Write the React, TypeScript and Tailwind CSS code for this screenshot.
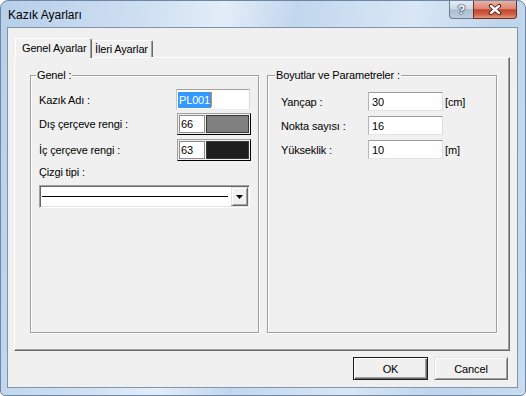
export default function App() {
  const label = "leading-[14px] whitespace-nowrap";
  const input =
    "bg-white border border-t-[#9a9a9a] border-l-[#b4b4b4] border-r-[#dcdcdc] border-b-[#e6e6e6] flex items-center pl-[3px] leading-[14px]";
  return (
    <div className="w-[526px] h-[396px] overflow-hidden bg-white font-['Liberation_Sans',Arial,sans-serif] text-[11px] tracking-[-0.15px] text-black">
      <div className="w-[526px] h-[396px] rounded-t-[8px] rounded-b-[5px] border border-[#6d86a3] bg-[linear-gradient(100deg,#b7cfe9_0%,#cfe0f2_25%,#e3edf8_38%,#c2d7ee_50%,#d9e7f5_70%,#bfd5ec_85%,#c9dcf0_100%)] flex flex-col">
        {/* title bar */}
        <div className="h-[26px] flex justify-between">
          <span className="pl-[7px] pt-[7px] text-[12px] leading-[14px] tracking-normal text-black">Kazık Ayarları</span>
          <div className="flex pr-[8px]">
            <div className="w-[24px] h-[18px] rounded-bl-[4px] border border-t-0 border-r-0 border-[#6a7c93] bg-[linear-gradient(180deg,#e4ecf5_0%,#ccd9e7_45%,#abbdd2_52%,#bccddf_100%)] flex items-center justify-center">
              <span className="text-white font-bold text-[13px] leading-[14px] [text-shadow:0_0_1px_#1d2f45,0_0_1px_#1d2f45,0_0_2px_#1d2f45]">?</span>
            </div>
            <div className="w-[44px] h-[18px] rounded-br-[4px] border border-t-0 border-[#6b2e26] bg-[linear-gradient(180deg,#eab1a3_0%,#dc8674_45%,#c4452f_52%,#cf5f45_78%,#e49c7c_100%)] flex items-center justify-center">
              <svg width="14" height="11" viewBox="0 0 14 11">
                <path d="M3 2 L11 9 M11 2 L3 9" stroke="#4d1a12" strokeWidth="4.2" strokeLinecap="round" />
                <path d="M3 2 L11 9 M11 2 L3 9" stroke="#ffffff" strokeWidth="2.4" strokeLinecap="round" />
              </svg>
            </div>
          </div>
        </div>
        {/* client */}
        <div className="ml-[6px] w-[511px] h-[361px] border border-[#8193a9] bg-[#f0f0f0] flex flex-col pt-[10px] pl-[6px] pr-[7px]">
          {/* tabs */}
          <div className="flex items-end h-[19px] pl-[1px]">
            <div className="relative z-10 -mb-[1px] w-[77px] h-[20px] border-t border-l border-white border-r border-r-[#696969] shadow-[inset_-1px_0_0_#a0a0a0] rounded-tr-[2px] bg-[#f0f0f0] flex items-center pl-[6px] pb-[2px] leading-[14px]">
              Genel Ayarlar
            </div>
            <div className="w-[61px] h-[17px] border-t border-white border-r border-r-[#696969] shadow-[inset_-1px_0_0_#a0a0a0] rounded-tr-[2px] bg-[#f0f0f0] flex items-center pl-[3px] leading-[14px]">
              İleri Ayarlar
            </div>
          </div>
          {/* panel */}
          <div className="h-[294px] border border-t-white border-l-white border-r-[#696969] border-b-[#696969] shadow-[inset_-1px_-1px_0_#a0a0a0] flex pt-[17px] pl-[15px] gap-[8px]">
            {/* left group */}
            <div className="relative w-[229px] h-[258px] border border-[#a0a0a0] shadow-[inset_1px_1px_0_#fff,1px_1px_0_#fff] flex flex-col pl-[8px] pt-[13px]">
              <span className="absolute left-[5px] -top-[8px] px-[1px] bg-[#f0f0f0] leading-[14px]">Genel :</span>
              <div className="flex items-center h-[21px]">
                <span className={label + " w-[137px]"}>Kazık Adı :</span>
                <div className="w-[74px] h-[21px] bg-white border border-t-[#a0a0a0] border-l-[#c8c8c8] border-r-[#d8d8d8] border-b-[#ececec] flex items-center pl-[1px]">
                  <span className="bg-[#3399ff] text-white leading-[16px] px-[1px]">PL001</span>
                  <span className="w-[1px] h-[15px] bg-[#e08a2a]" />
                </div>
              </div>
              <div className="flex items-center h-[21px] mt-[3px]">
                <span className={label + " w-[138px]"}>Dış çerçeve rengi :</span>
                <div className="w-[74px] h-[22px] border border-t-[#a0a0a0] border-l-[#a0a0a0] border-r-black border-b-black flex p-[1px] gap-[1px]">
                  <div className="w-[26px] bg-white border border-[#8c8c8c] flex items-center pl-[1px] leading-[14px]">66</div>
                  <div className="flex-1 bg-[#808080] border border-[#3a3a3a]" />
                </div>
              </div>
              <div className="flex items-center h-[21px] mt-[5px]">
                <span className={label + " w-[138px]"}>İç çerçeve rengi :</span>
                <div className="w-[74px] h-[22px] border border-t-[#a0a0a0] border-l-[#a0a0a0] border-r-black border-b-black flex p-[1px] gap-[1px]">
                  <div className="w-[26px] bg-white border border-[#8c8c8c] flex items-center pl-[1px] leading-[14px]">63</div>
                  <div className="flex-1 bg-[#1e1e1e] border border-[#3a3a3a]" />
                </div>
              </div>
              <span className={label + " mt-[5px]"}>Çizgi tipi :</span>
              <div className="mt-[6px] w-[211px] h-[23px] bg-white border border-t-[#a0a0a0] border-l-[#a0a0a0] border-r-white border-b-white shadow-[inset_1px_1px_0_#696969,inset_-1px_-1px_0_#e3e3e3] flex items-center pl-[2px] pr-[1px]">
                <div className="w-[186px] h-[1px] bg-black" />
                <div className="ml-auto w-[17px] h-[19px] bg-[#f0f0f0] border border-t-[#e3e3e3] border-l-[#e3e3e3] border-r-[#696969] border-b-[#696969] shadow-[inset_1px_1px_0_#fff,inset_-1px_-1px_0_#a0a0a0] flex items-center justify-center">
                  <svg width="7" height="4" viewBox="0 0 7 4">
                    <path d="M0 0 H7 L3.5 4 Z" fill="#000" />
                  </svg>
                </div>
              </div>
            </div>
            {/* right group */}
            <div className="relative w-[230px] h-[258px] border border-[#a0a0a0] shadow-[inset_1px_1px_0_#fff,1px_1px_0_#fff] flex flex-col pl-[13px] pt-[16px]">
              <span className="absolute left-[7px] -top-[8px] px-[1px] bg-[#f0f0f0] leading-[14px]">Boyutlar ve Parametreler :</span>
              <div className="flex items-center h-[19px]">
                <span className={label + " w-[87px]"}>Yançap :</span>
                <div className={input + " w-[75px] h-[19px]"}>30</div>
                <span className={label + " ml-[2px]"}>[cm]</span>
              </div>
              <div className="flex items-center h-[19px] mt-[5px]">
                <span className={label + " w-[87px]"}>Nokta sayısı :</span>
                <div className={input + " w-[75px] h-[19px]"}>16</div>
              </div>
              <div className="flex items-center h-[19px] mt-[5px]">
                <span className={label + " w-[87px]"}>Yükseklik :</span>
                <div className={input + " w-[75px] h-[19px]"}>10</div>
                <span className={label + " ml-[2px]"}>[m]</span>
              </div>
            </div>
          </div>
          {/* buttons */}
          <div className="mt-[6px] flex justify-end gap-[6px] pr-[2px]">
            <button className="w-[75px] h-[23px] bg-[#f0f0f0] border border-[#1a1a1a] shadow-[inset_1px_1px_0_#fff,inset_-1px_-1px_0_#696969,inset_-2px_-2px_0_#a0a0a0] flex items-center justify-center leading-[14px]">
              OK
            </button>
            <button className="w-[74px] h-[23px] bg-[#f0f0f0] border border-t-[#e3e3e3] border-l-[#e3e3e3] border-r-[#696969] border-b-[#696969] shadow-[inset_1px_1px_0_#fff,inset_-1px_-1px_0_#a0a0a0] flex items-center justify-center leading-[14px]">
              Cancel
            </button>
          </div>
        </div>
      </div>
    </div>
  );
}
